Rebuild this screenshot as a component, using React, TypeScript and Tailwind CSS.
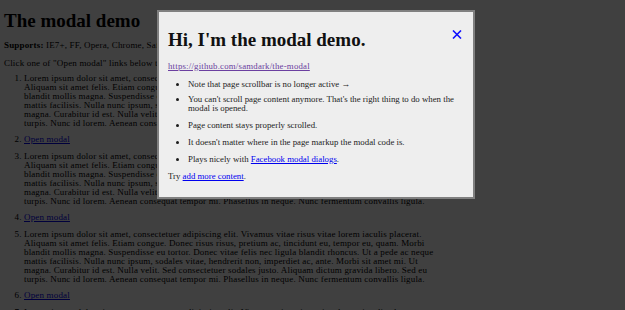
import React from 'react';

const LOREM = [
  'Lorem ipsum dolor sit amet, consectetuer adipiscing elit. Vivamus vitae risus vitae lorem iaculis placerat.',
  'Aliquam sit amet felis. Etiam congue. Donec risus risus, pretium ac, tincidunt eu, tempor eu, quam. Morbi',
  'blandit mollis magna. Suspendisse eu tortor. Donec vitae felis nec ligula blandit rhoncus. Ut a pede ac neque',
  'mattis facilisis. Nulla nunc ipsum, sodales vitae, hendrerit non, imperdiet ac, ante. Morbi sit amet mi. Ut',
  'magna. Curabitur id est. Nulla velit. Sed consectetuer sodales justo. Aliquam dictum gravida libero. Sed eu',
  'turpis. Nunc id lorem. Aenean consequat tempor mi. Phasellus in neque. Nunc fermentum convallis ligula.',
];

function Lorem() {
  return (
    <>
      {LOREM.map((line) => (
        <span key={line} className="block whitespace-nowrap">
          {line}
        </span>
      ))}
    </>
  );
}

function OpenLink() {
  return (
    <a href="#" className="text-[#0000ee] underline">
      Open modal
    </a>
  );
}

/** Close cross in the modal corner. */
function CloseIcon() {
  return (
    <svg viewBox="0 0 10 9" className="h-[9px] w-[10px]" aria-hidden="true">
      <path d="M1 0.5 L9 8.5 M9 0.5 L1 8.5" stroke="#1010ff" strokeWidth="1.6" fill="none" />
    </svg>
  );
}

export default function App() {
  return (
    <div
      className="relative h-[310px] w-[625px] overflow-hidden bg-white text-black"
      style={{ fontFamily: '"Liberation Serif", "Times New Roman", serif' }}
    >
      {/* Page underneath */}
      <div className="pl-[4px] pt-[11px] text-[9px] leading-[9px] tracking-[0.17px]">
        <h1 className="mb-[9.5px] text-[19px] font-bold leading-[20px] tracking-normal">The modal demo</h1>
        <p className="mb-[9px]">
          <strong>Supports:</strong> IE7+, FF, Opera, Chrome, Safari, mobile browsers.
        </p>
        <p className="mb-[6px]">Click one of &quot;Open modal&quot; links below to see it in action.</p>
        <ol className="list-decimal pl-[20px]">
          {[1, 2, 3, 4, 5, 6, 7].map((n) => (
            <li key={n} className="mb-[7.6px]">
              {n % 2 === 1 ? <Lorem /> : <OpenLink />}
            </li>
          ))}
        </ol>
      </div>

      {/* Overlay */}
      <div className="absolute inset-0 bg-black/75" />

      {/* Modal */}
      <div className="absolute left-[157px] top-[10px] h-[189px] w-[318px] border-2 border-[#808080] bg-[#eeeeee] pl-[9px] pt-[18px] text-[8.8px] leading-[9px] text-[#1c1c1c]">
        <button className="absolute right-[11px] top-[18px] flex">
          <CloseIcon />
        </button>
        <h2 className="mb-[11.5px] text-[19px] font-bold leading-[20px] text-[#111]">
          Hi, I&apos;m the modal demo.
        </h2>
        <a href="#" className="tracking-[0.2px] text-[#6b3fa0] underline">
          https://github.com/samdark/the-modal
        </a>
        <ul className="mt-[9px] list-disc pl-[20px]">
          <li className="mb-[6px]">Note that page scrollbar is no longer active →</li>
          <li className="mb-[8px]">
            You can&apos;t scroll page content anymore. That&apos;s the right thing to do when the
            <br />
            modal is opened.
          </li>
          <li className="mb-[8px]">Page content stays properly scrolled.</li>
          <li className="mb-[8px]">It doesn&apos;t matter where in the page markup the modal code is.</li>
          <li className="mb-[8px]">
            Plays nicely with{' '}
            <a href="#" className="text-[#0000ee] underline">
              Facebook modal dialogs
            </a>
            .
          </li>
        </ul>
        <p>
          Try{' '}
          <a href="#" className="text-[#0000ee] underline">
            add more content
          </a>
          .
        </p>
      </div>
    </div>
  );
}
